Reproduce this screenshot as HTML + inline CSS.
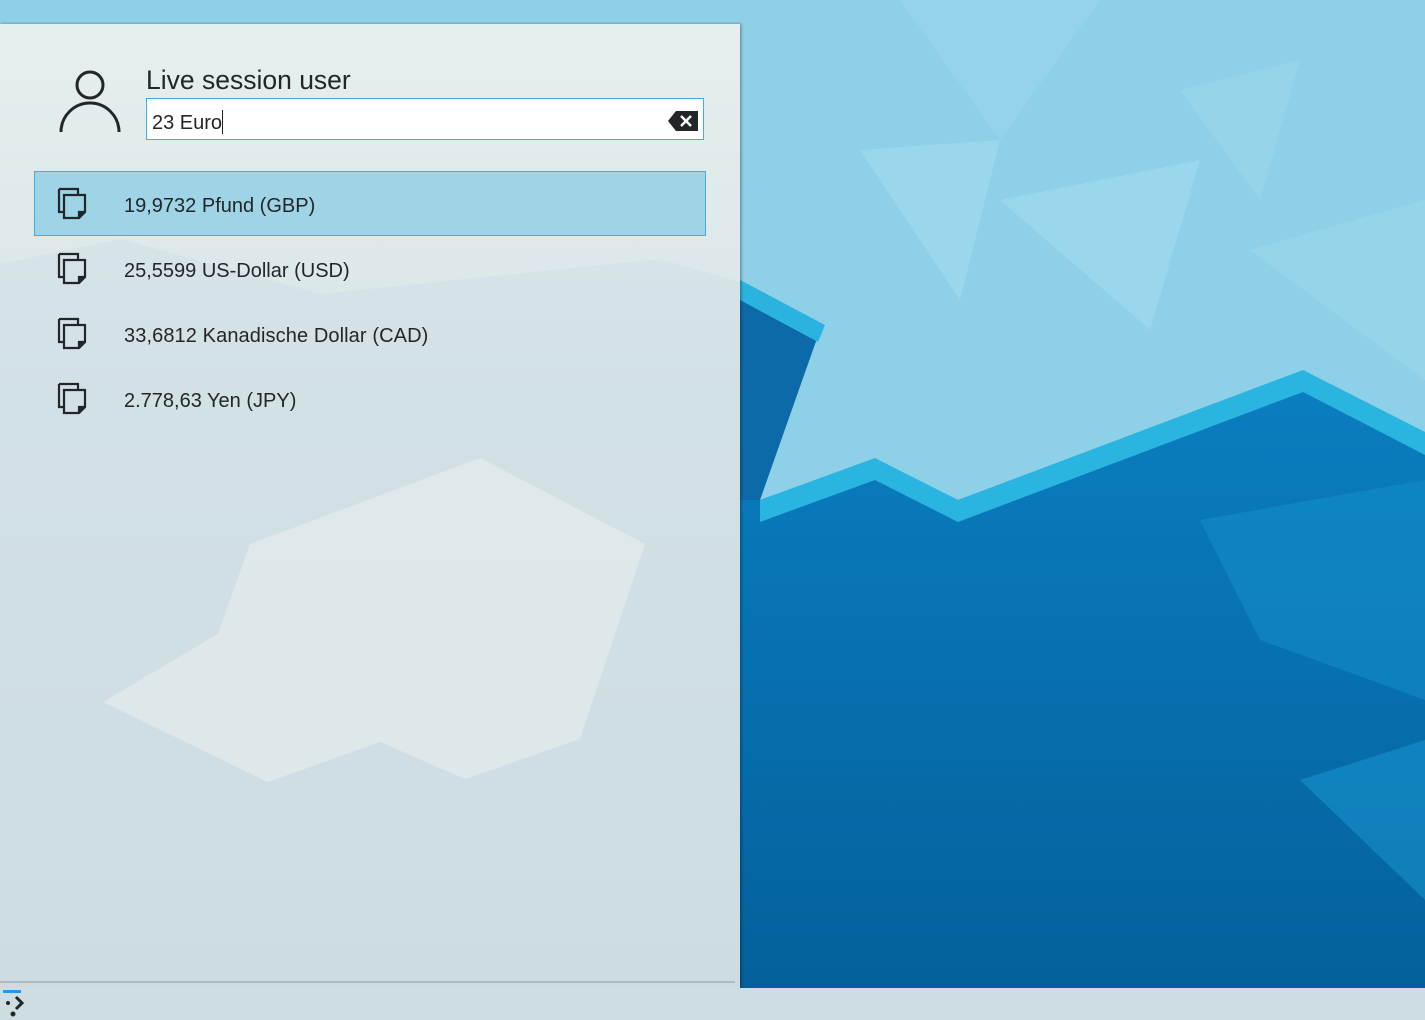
<!DOCTYPE html>
<html><head><meta charset="utf-8"><style>
body{margin:0;width:1425px;height:1020px;overflow:hidden;position:relative;font-family:"Liberation Sans","DejaVu Sans",sans-serif;background:#8fd0e8}
#bg{position:absolute;left:0;top:0}
#panel{position:absolute;left:0;top:24px;width:740px;height:964px;background:linear-gradient(180deg,#e6efef 0%,#d6e4e8 40%,#cddde2 100%);box-shadow:1px 0 3px rgba(0,0,0,.4)}
.t{position:absolute;color:#232629}
#bar{position:absolute;left:0;top:988px;width:1425px;height:32px;background:#cddde2}
</style></head><body>
<svg id="bg" width="1425" height="1020">
<defs><linearGradient id="dk" x1="0" y1="0" x2="0" y2="1"><stop offset="0" stop-color="#0a7fc0"/><stop offset="1" stop-color="#04609c"/></linearGradient></defs>
<rect width="1425" height="1020" fill="#8ed0e8"/>
<polygon points="900,0 1100,0 1000,140" fill="#94d3ea"/>
<polygon points="1180,90 1300,60 1260,200" fill="#96d4ea"/>
<polygon points="860,150 1000,140 960,300" fill="#9ad6ec"/>
<polygon points="1000,200 1200,160 1150,330" fill="#9ad6ec"/>
<polygon points="1250,250 1425,200 1425,380" fill="#96d4ea"/>
<polygon points="740,280 820,330 760,500 740,500" fill="#0c6aa8"/>
<polygon points="740,280 825,325 818,342 740,300" fill="#2bb3e0"/>
<polygon points="760,500 875,460 958,500 1303,372 1425,435 1425,990 740,990 740,500" fill="url(#dk)"/>
<polygon points="760,500 875,458 958,500 1303,370 1425,432 1425,455 1303,392 958,522 875,480 760,522" fill="#2ab4e0"/>
<polygon points="1200,520 1425,480 1425,700 1260,640" fill="#1590cc" opacity=".5"/>
<polygon points="1300,780 1425,740 1425,900" fill="#1a9ad2" opacity=".5"/>
</svg>
<div id="panel">
<svg style="position:absolute;left:0;top:0" width="740" height="964">
<polygon points="0,240 120,215 320,270 660,235 740,258 740,964 0,964" fill="#ccdde3" opacity=".4"/>
<polygon points="250,520 480,434 645,520 580,715 465,755 380,718 268,758 103,678 218,610" fill="#e8eeee" opacity=".6"/>
<line x1="0" y1="958" x2="735" y2="958" stroke="#a4b2b8" stroke-width="1.5"/>
</svg>
<svg style="position:absolute;left:58px;top:46px" width="64" height="64"><circle cx="32" cy="15" r="13" fill="none" stroke="#232629" stroke-width="3"/><path d="M3 62 A29 29 0 0 1 61 62" fill="none" stroke="#232629" stroke-width="3"/></svg>
<div class="t" style="left:146px;top:41px;font-size:26.5px">Live session user</div>
<div style="position:absolute;left:146px;top:74px;width:556px;height:40px;background:#fff;border:1.5px solid #3daee9"></div>
<div class="t" style="left:152px;top:86px;font-size:20px">23 Euro<span style="display:inline-block;width:1px;height:24px;background:#232629;vertical-align:-5px"></span></div>
<svg style="position:absolute;left:667px;top:86px" width="32" height="22"><path d="M1 11 L9 1 H31 V21 H9 Z" fill="#232629"/><path d="M14 6 L24 16 M24 6 L14 16" stroke="#fff" stroke-width="2.5"/></svg>
<div style="position:absolute;left:34px;top:147px;width:670px;height:63px;background:#9ed4e5;border:1px solid #3daee9"></div>
</div>
<svg style="position:absolute;left:0;top:0" width="740" height="420">
<g id="ic" fill="none" stroke="#232629" stroke-width="2.2"><path d="M59 189 H78 V194 M59 189 V212 H64"/><path d="M64 195 H85 V212 L79 218 H64 Z"/><path d="M79 218 V212 H85" fill="#232629"/></g>
<use href="#ic" y="65"/><use href="#ic" y="130"/><use href="#ic" y="195"/>
</svg>
<div class="t" style="left:124px;top:195px;font-size:20px">19,9732 Pfund (GBP)</div>
<div class="t" style="left:124px;top:260px;font-size:20px">25,5599 US-Dollar (USD)</div>
<div class="t" style="left:124px;top:325px;font-size:20px;letter-spacing:.1px">33,6812 Kanadische Dollar (CAD)</div>
<div class="t" style="left:124px;top:390px;font-size:20px">2.778,63 Yen (JPY)</div>
<div id="bar"></div>
<div style="position:absolute;left:3px;top:990px;width:18px;height:3px;background:#1d99f3"></div>
<svg style="position:absolute;left:3px;top:994px" width="30" height="26"><circle cx="5" cy="9" r="2" fill="#232629"/><circle cx="10" cy="20" r="2.5" fill="#232629"/><path d="M13 3 L19 9 L13 15" fill="none" stroke="#232629" stroke-width="3"/></svg>
</body></html>
